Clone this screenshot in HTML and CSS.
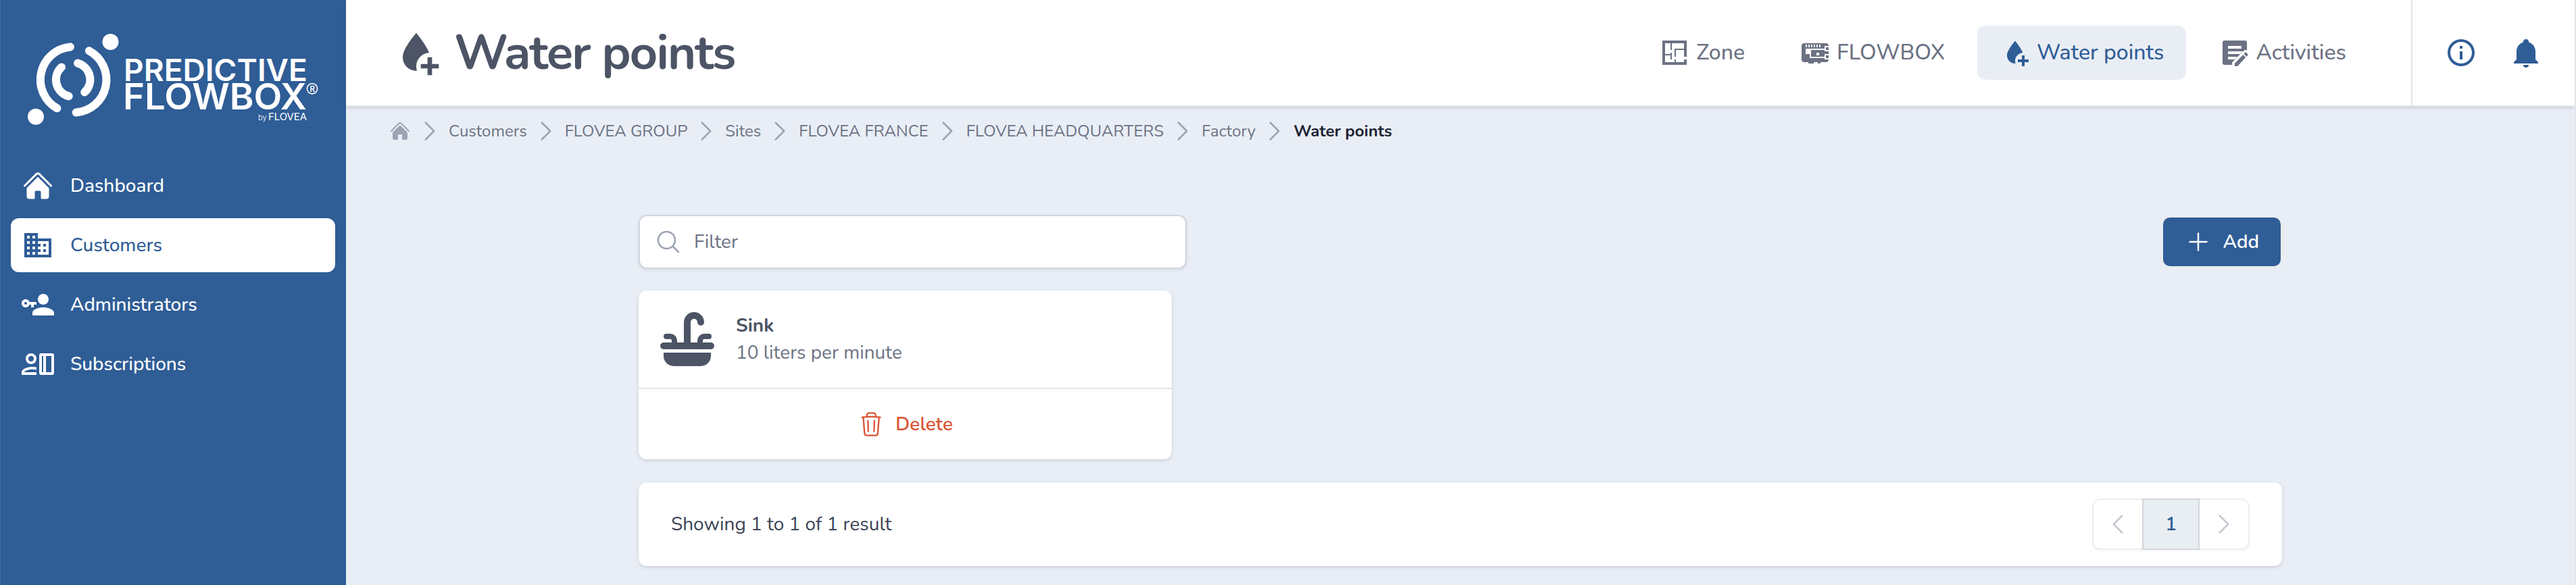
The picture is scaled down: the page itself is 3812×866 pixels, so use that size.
FILE: index.html
```
<!DOCTYPE html>
<html lang="en">
<head>
    <meta charset="UTF-8">
    <meta name="viewport" content="width=device-width, initial-scale=1.0">
    <title>Water points</title>
    <link rel="stylesheet" href="styles.css">
</head>
<body>
    <svg class="sprite">
        <symbol id="home" viewBox="0 0 24 24">
            <path d="M11.47 3.84a.75.75 0 011.06 0l8.69 8.69a.75.75 0 101.06-1.06l-8.689-8.69a2.25 2.25 0 00-3.182 0l-8.69 8.69a.75.75 0 001.061 1.06l8.69-8.69z"/>
            <path d="M12 5.432l8.159 8.159c.03.03.06.058.091.086v6.198c0 1.035-.84 1.875-1.875 1.875H15a.75.75 0 01-.75-.75v-4.5a.75.75 0 00-.75-.75h-3a.75.75 0 00-.75.75V21a.75.75 0 01-.75.75H5.625a1.875 1.875 0 01-1.875-1.875v-6.198a2.29 2.29 0 00.091-.086L12 5.432z"/>
        </symbol>
        <symbol id="water-plus" viewBox="0 0 24 24">
            <path d="M14 17h3v-3h2v3h3v2h-3v3h-2v-3h-3z"/>
            <path d="M12 3.25S6 10 6 14c0 3.31 2.69 6 6 6l.3-.02A6 6 0 0 1 12 18c0-3.1 2.4-5.7 5.7-6C16.5 8.7 12 3.25 12 3.25z"/>
        </symbol>
        <symbol id="chevron" viewBox="0 0 24 24">
            <path d="M8.25 4.5l7.5 7.5-7.5 7.5" fill="none" stroke="currentColor" stroke-width="1.5" stroke-linecap="round" stroke-linejoin="round"/>
        </symbol>
    </svg>

    <aside class="sidebar">
        <svg class="logo" viewBox="0 0 512 235">
            <g fill="none" stroke="#fff" stroke-width="12" stroke-linecap="round">
                <path d="M104 69.5A48.7 48.7 0 0 0 84.4 160.3"/>
                <path d="M131.9 75.2A48.7 48.7 0 0 1 112.7 166.6"/>
                <path d="M91 99.4A25.3 25.3 0 0 0 101.7 142.4"/>
                <path d="M115 93.5A25.3 25.3 0 0 1 125.3 136.4"/>
            </g>
            <circle cx="163.5" cy="62" r="12"/>
            <circle cx="53" cy="172.7" r="12"/>
            <text class="logo-word" x="183" y="120" font-size="45" textLength="272" lengthAdjust="spacingAndGlyphs">PREDICTIVE</text>
            <text class="logo-word" x="182" y="162" font-size="53.5" textLength="272" lengthAdjust="spacingAndGlyphs">FLOWBOX</text>
            <circle cx="462" cy="131.3" r="7.6" fill="none" stroke="#fff" stroke-width="1.6"/>
            <text class="logo-word" x="458.4" y="135.6" font-size="11.5">R</text>
            <text class="logo-by" x="382" y="178" font-size="11">by</text>
            <text class="logo-sub" x="397" y="178" font-size="14.5" textLength="57" lengthAdjust="spacingAndGlyphs">FLOVEA</text>
        </svg>
        <nav class="menu">
            <a class="menu-item">
                <svg class="icon"><use href="#home"/></svg>
                Dashboard
            </a>
            <a class="menu-item active">
                <svg class="icon" viewBox="0 0 24 24"><path d="M18,15H16V17H18M18,11H16V13H18M20,19H12V17H14V15H12V13H14V11H12V9H20M10,7H8V5H10M10,11H8V9H10M10,15H8V13H10M10,19H8V17H10M6,7H4V5H6M6,11H4V9H6M6,15H4V13H6M6,19H4V17H6M12,7V3H2V21H22V7H12Z"/></svg>
                Customers
            </a>
            <a class="menu-item">
                <svg class="icon" viewBox="0 0 24 24"><path d="M11 10V12H9V14H7V12H5.8C5.4 13.2 4.3 14 3 14C1.3 14 0 12.7 0 11S1.3 8 3 8C4.3 8 5.4 8.8 5.8 10H11M3 10C2.4 10 2 10.4 2 11S2.4 12 3 12 4 11.6 4 11 3.6 10 3 10M16 14C18.7 14 24 15.3 24 18V20H8V18C8 15.3 13.3 14 16 14M16 12C13.8 12 12 10.2 12 8S13.8 4 16 4 20 5.8 20 8 18.2 12 16 12Z"/></svg>
                Administrators
            </a>
            <a class="menu-item">
                <svg class="icon" viewBox="0 0 24 24">
                    <path fill-rule="evenodd" d="M7 4a4 4 0 1 1 0 8 4 4 0 0 1 0-8zm0 2a2 2 0 1 0 0 4 2 2 0 0 0 0-4zM11 14.3A16 16 0 0 0 8 14c-2.7 0-8 1.3-8 4v2h11v-2H1.9c0-.7 2.9-2.1 6.1-2.1 1.1 0 2.1.1 3 .4z"/>
                    <path fill-rule="evenodd" d="M14.5 4h8A1.5 1.5 0 0 1 24 5.5v13a1.5 1.5 0 0 1-1.5 1.5h-8a1.5 1.5 0 0 1-1.5-1.5v-13A1.5 1.5 0 0 1 14.5 4zM15 6v12h1V6zM18 6v12h4V6z"/>
                </svg>
                Subscriptions
            </a>
        </nav>
    </aside>

    <div class="page">
        <header class="header">
            <h1 class="title">
                <svg class="title-icon"><use href="#water-plus"/></svg>
                Water points
            </h1>
            <nav class="tabs">
                <a class="tab">
                    <svg class="icon" viewBox="0 0 24 24"><path d="M10 5V10H9V5H5V13H9V12H10V17H9V14H5V19H12V17H13V19H19V17H21V21H3V3H21V15H19V10H13V15H12V9H19V5H10Z"/></svg>
                    Zone
                </a>
                <a class="tab">
                    <svg class="icon" viewBox="0 0 24 24">
                        <path d="M4 5h16a2 2 0 0 1 2 2v10a2 2 0 0 1-2 2h-4v1h-2v-1h-3v1H7v-1H4a2 2 0 0 1-2-2V7a2 2 0 0 1 2-2z"/>
                        <path fill="#fff" d="M5 6h1v2H5zM7 6h1v2H7zM9 6h1v2H9zM11 6h1v2h-1zM13 6h1v2h-1zM15 6h1v2h-1zM5 9h14v1H9v5h10v1H8v-3H5zM13 12h2v2h-2zM19 7h3v1h-2v2h2v1h-3zM19 13h3v1h-2v2h2v1h-3z"/>
                    </svg>
                    FLOWBOX
                </a>
                <a class="tab active">
                    <svg class="icon"><use href="#water-plus"/></svg>
                    Water points
                </a>
                <a class="tab">
                    <svg class="icon" viewBox="0 0 24 24">
                        <path d="M4.5 3h15A1.5 1.5 0 0 1 21 4.5V10.2a2.5 2.5 0 0 0-2.7.7L10 19.2V21H4.5A1.5 1.5 0 0 1 3 19.5v-15A1.5 1.5 0 0 1 4.5 3z"/>
                        <path fill="#fff" d="M7 7h10v2H7zM7 11h11l-2 2H7zM7 15h7l-2 2H7z"/>
                        <path d="M21.7 13.85L20.7 14.85L18.65 12.85L19.65 11.85C19.86 11.64 20.21 11.64 20.42 11.85L21.7 13.08C21.92 13.29 21.92 13.64 21.7 13.85M12 19.94L18.07 13.5L20.12 15.5L14.06 22H12V19.94"/>
                    </svg>
                    Activities
                </a>
            </nav>
            <div class="actions">
                <svg class="icon" viewBox="0 0 24 24"><path d="M11,9H13V7H11M12,20C7.59,20 4,16.41 4,12C4,7.59 7.59,4 12,4C16.41,4 20,7.59 20,12C20,16.41 16.41,20 12,20M12,2A10,10 0 0,0 2,12A10,10 0 0,0 12,22A10,10 0 0,0 22,12A10,10 0 0,0 12,2M11,17H13V11H11V17Z"/></svg>
                <svg class="icon" viewBox="0 0 24 24"><path d="M21,19V20H3V19L5,17V11C5,7.9 7.03,5.17 10,4.29C10,4.19 10,4.1 10,4A2,2 0 0,1 12,2A2,2 0 0,1 14,4C14,4.1 14,4.19 14,4.29C16.97,5.17 19,7.9 19,11V17L21,19M14,21A2,2 0 0,1 12,23A2,2 0 0,1 10,21"/></svg>
            </div>
        </header>

        <nav class="breadcrumb">
            <svg class="crumb-home"><use href="#home"/></svg>
            <svg class="chevron"><use href="#chevron"/></svg>
            <a>Customers</a>
            <svg class="chevron"><use href="#chevron"/></svg>
            <a>FLOVEA GROUP</a>
            <svg class="chevron"><use href="#chevron"/></svg>
            <a>Sites</a>
            <svg class="chevron"><use href="#chevron"/></svg>
            <a>FLOVEA FRANCE</a>
            <svg class="chevron"><use href="#chevron"/></svg>
            <a>FLOVEA HEADQUARTERS</a>
            <svg class="chevron"><use href="#chevron"/></svg>
            <a>Factory</a>
            <svg class="chevron"><use href="#chevron"/></svg>
            <span class="current">Water points</span>
        </nav>

        <main class="content">
            <div class="toolbar">
                <label class="filter">
                    <svg class="icon-sm" viewBox="0 0 24 24"><path d="M21 21l-5.197-5.197m0 0A7.5 7.5 0 105.196 5.196a7.5 7.5 0 0010.607 10.607z" fill="none" stroke="currentColor" stroke-width="1.5" stroke-linecap="round"/></svg>
                    <input type="text" placeholder="Filter">
                </label>
                <button class="add">
                    <svg class="icon-sm" viewBox="0 0 24 24"><path d="M12 4.5v15m7.5-7.5h-15" stroke="currentColor" stroke-width="1.5" stroke-linecap="round"/></svg>
                    Add
                </button>
            </div>

            <div class="cards">
                <div class="card">
                    <div class="card-body">
                        <svg class="sink" viewBox="0 0 80 80">
                            <g fill="none" stroke="currentColor" stroke-linecap="round">
                                <path d="M40 47V15a10 10 0 0 1 20 0" stroke-width="10"/>
                                <path d="M9 36h6a6 6 0 0 1 6 6v5M72 36h-7a6 6 0 0 0-6 6v5" stroke-width="8"/>
                            </g>
                            <rect y="45" width="80" height="10" rx="5"/>
                            <path d="M5 60h70v5a15 15 0 0 1-15 15H20A15 15 0 0 1 5 65z"/>
                        </svg>
                        <div>
                            <div class="card-name">Sink</div>
                            <div>10 liters per minute</div>
                        </div>
                    </div>
                    <a class="delete">
                        <svg class="icon-sm" viewBox="0 0 40 40">
                            <g fill="none" stroke="currentColor" stroke-width="2.3" stroke-linecap="round" stroke-linejoin="round">
                                <path d="M6.6 9.8Q20 7.8 33.7 9.8"/>
                                <path d="M13.8 8.5V6.8a3.5 3.5 0 0 1 3.5-3.5h6a3.5 3.5 0 0 1 3.5 3.5v1.7"/>
                                <path d="M8.5 9.6L10.4 33.4a3.6 3.6 0 0 0 3.6 3.3h12.4a3.6 3.6 0 0 0 3.6-3.3L31.800 9.6"/>
                                <path d="M15.4 15l.5 15.5M24.9 15l-.5 15.5"/>
                            </g>
                        </svg>
                        Delete
                    </a>
                </div>
            </div>

            <div class="pagination">
                <p>Showing 1 to 1 of 1 result</p>
                <div class="pager">
                    <span class="pager-btn prev"><svg class="icon-sm"><use href="#chevron"/></svg></span>
                    <span class="pager-btn page-number">1</span>
                    <span class="pager-btn next"><svg class="icon-sm"><use href="#chevron"/></svg></span>
                </div>
            </div>
        </main>
    </div>
</body>
</html>
```
FILE: styles.css
```
* {
    box-sizing: border-box;
}
body {
    font-family: Nunito, Lato, "Open Sans", sans-serif;
    font-size: 28px;
    line-height: 40px;
    color: #6c7283;
    background-color: #e9eef6;
    margin: 0;
    height: 100vh;
    display: flex;
    overflow: hidden;
    border-right: 2px solid #e3e5ea;
}
svg {
    display: block;
    flex-shrink: 0;
    fill: currentColor;
}
.sprite {
    display: none;
}
.icon {
    width: 48px;
    height: 48px;
}
.icon-sm {
    width: 40px;
    height: 40px;
}

/* Sidebar */
.sidebar {
    width: 512px;
    flex-shrink: 0;
    background-color: #2f5d96;
    color: #fff;
    box-shadow: inset 1px 0 0 #456e9f;
}
.logo {
    width: 512px;
    height: 235px;
}
.logo-word {
    font-family: Inter, sans-serif;
    font-weight: 600;
}
.logo-by {
    font-family: Inter, sans-serif;
    font-weight: 300;
}
.logo-sub {
    font-family: Inter, sans-serif;
    font-weight: 400;
}
.menu {
    display: flex;
    flex-direction: column;
    gap: 8px;
    padding: 0 16px;
}
.menu-item {
    display: flex;
    align-items: center;
    gap: 24px;
    height: 80px;
    padding: 0 16px;
    border-radius: 12px;
    font-weight: 500;
}
.menu-item.active {
    background-color: #fff;
    color: #2f5d96;
}

/* Header */
.page {
    flex: 1;
    min-width: 0;
}
.header {
    display: flex;
    height: 158px;
    background-color: #fff;
    border-bottom: 2px solid #e3e6eb;
    box-shadow: 0 2px 6px rgba(0, 0, 0, 0.1), 0 2px 4px -2px rgba(0, 0, 0, 0.1);
}
.title {
    display: flex;
    align-items: center;
    gap: 16px;
    margin: 0 auto 0 64px;
    font-size: 72px;
    font-weight: 700;
    letter-spacing: -0.025em;
    color: #4c5465;
}
.title-icon {
    width: 80px;
    height: 80px;
}
.tabs {
    display: flex;
    align-items: center;
    gap: 16px;
    padding-right: 64px;
}
.tab {
    display: flex;
    align-items: center;
    gap: 8px;
    height: 80px;
    padding: 0 32px;
    border-radius: 12px;
    font-size: 32px;
    font-weight: 500;
}
.tab.active {
    background-color: #e9eef5;
    color: #2f5d96;
}
.actions {
    display: flex;
    align-items: center;
    gap: 48px;
    padding: 0 48px;
    border-left: 2px solid #e3e6eb;
    color: #2f5d96;
}

/* Breadcrumb */
.breadcrumb {
    display: flex;
    align-items: center;
    gap: 8px;
    height: 72px;
    padding-left: 64px;
    font-size: 24px;
    font-weight: 400;
}
.crumb-home {
    width: 32px;
    height: 32px;
    color: #9ca3b2;
}
.chevron {
    width: 40px;
    height: 40px;
    color: #9ca3b2;
}
.current {
    font-weight: 700;
    color: #1d2433;
}

/* Content */
.content {
    width: 2432px;
    margin: 88px auto 0;
}
.toolbar {
    display: flex;
    justify-content: space-between;
    align-items: center;
}
.filter {
    display: flex;
    align-items: center;
    gap: 18px;
    width: 33.333%;
    height: 80px;
    padding: 0 22px;
    background-color: #fff;
    border: 2px solid #d1d5de;
    border-radius: 12px;
    box-shadow: 0 2px 4px rgba(0, 0, 0, 0.08);
    color: #9ca3b2;
}
.filter input {
    flex: 1;
    border: none;
    outline: none;
    padding: 0;
    background: none;
    font: inherit;
}
.filter input::placeholder {
    color: #6c7283;
}
.add {
    display: flex;
    align-items: center;
    gap: 16px;
    height: 72px;
    margin: 0 2px;
    padding: 0 32px;
    border: none;
    border-radius: 10px;
    background-color: #2f5d96;
    color: #fff;
    font: inherit;
    font-weight: 600;
    box-shadow: 0 0 0 2px #e8ebee;
}
.cards {
    display: grid;
    grid-template-columns: repeat(3, 1fr);
    gap: 32px;
    margin: 32px 0 34px;
}
.card,
.pagination {
    background-color: #fff;
    border-radius: 12px;
    box-shadow: 0 2px 6px rgba(0, 0, 0, 0.1), 0 2px 4px -2px rgba(0, 0, 0, 0.1);
}
.card-body {
    display: flex;
    gap: 32px;
    padding: 32px;
    border-bottom: 2px solid #e3e6eb;
}
.sink {
    width: 80px;
    height: 80px;
    color: #4c5465;
}
.card-name {
    font-weight: 700;
    color: #4c5465;
}
.delete {
    display: flex;
    justify-content: center;
    align-items: center;
    gap: 16px;
    height: 104px;
    font-weight: 600;
    color: #da5533;
}
.pagination {
    display: flex;
    justify-content: space-between;
    align-items: center;
    padding: 24px 48px;
    color: #3b4356;
}
.pagination p {
    margin: 0;
}
.pager {
    display: flex;
    border-radius: 12px;
    box-shadow: 0 2px 4px rgba(0, 0, 0, 0.03);
}
.pager-btn {
    height: 76px;
    padding: 16px;
    border: 2px solid #ededf2;
    color: #c5c8d0;
}
.prev {
    border-radius: 12px 0 0 12px;
}
.prev svg {
    transform: scaleX(-1);
}
.next {
    border-radius: 0 12px 12px 0;
    margin-left: -2px;
}
.page-number {
    position: relative;
    z-index: 1;
    margin-left: -2px;
    padding: 16px 32px;
    background-color: #e9eef3;
    border-color: #d1d5db;
    color: #2f5d96;
    font-weight: 600;
}
```
